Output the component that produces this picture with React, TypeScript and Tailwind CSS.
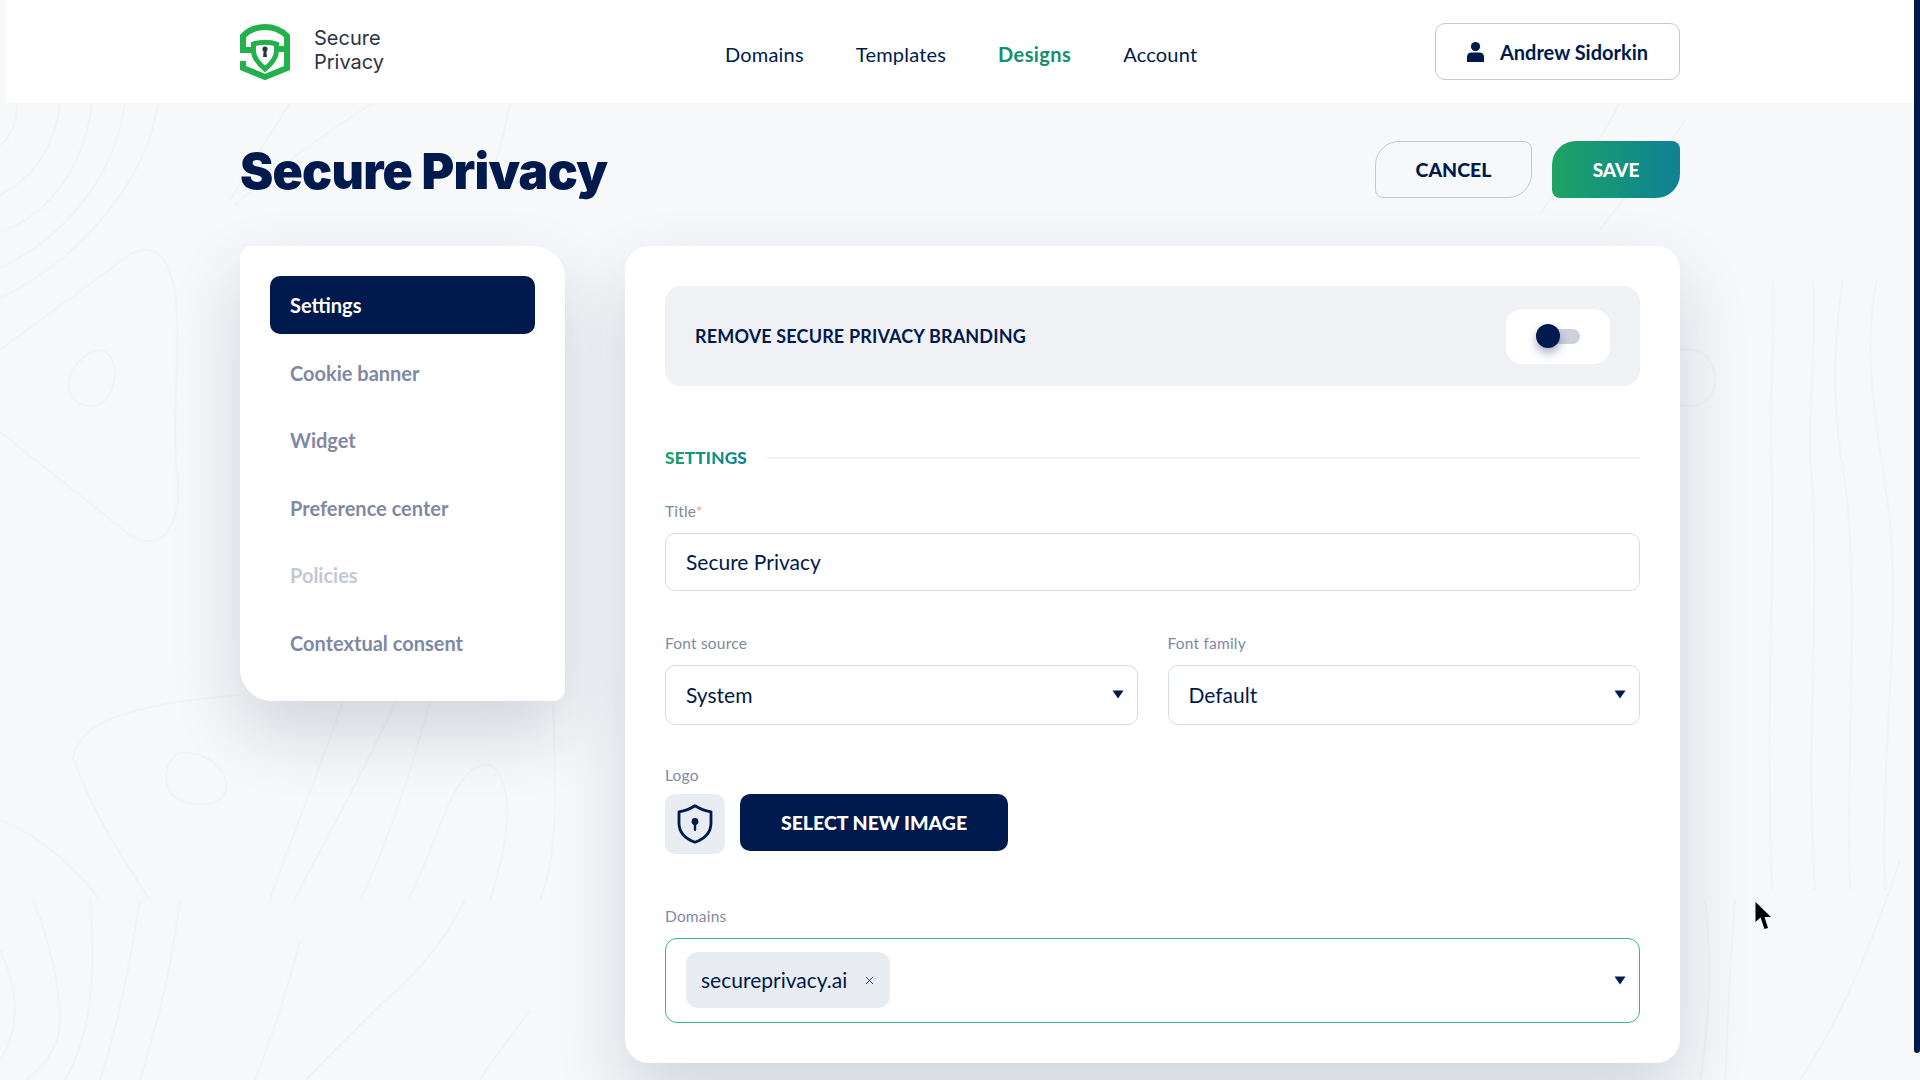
import { X } from 'lucide-react';

const NAV = [
  { label: 'Domains', active: false },
  { label: 'Templates', active: false },
  { label: 'Designs', active: true },
  { label: 'Account', active: false },
];

const SIDE = [
  { label: 'Settings', state: 'active' },
  { label: 'Cookie banner', state: 'idle' },
  { label: 'Widget', state: 'idle' },
  { label: 'Preference center', state: 'idle' },
  { label: 'Policies', state: 'off' },
  { label: 'Contextual consent', state: 'idle' },
];

function Logo() {
  return (
    <svg width="50" height="56" viewBox="0 0 50 56" fill="none" className="shrink-0">
      <path d="M47 22 V12 C40 5 32 3 25 3 C18 3 10 5 3 12 V26 H15" stroke="#22b14c" strokeWidth="6" />
      <path d="M3 37 V44 L25 53 L47 44 V25 H35" stroke="#22b14c" strokeWidth="6" />
      <path d="M13.500 20 C20 17.500 30 17.500 36.500 20 V27 C36.500 34 31 40 25 45 C19 40 13.500 34 13.500 27 Z" fill="#fff" stroke="#22b14c" strokeWidth="5" />
      <circle cx="25" cy="25" r="2.600" fill="#2c3344" />
      <path d="M23.800 26 H26.200 L27 33 H23 Z" fill="#2c3344" />
    </svg>
  );
}

function UserGlyph() {
  return (
    <svg width="17" height="20" viewBox="0 0 17 20" className="shrink-0">
      <circle cx="8.500" cy="4.600" r="4.600" fill="#001a4d" />
      <path d="M0 20 V14.500 A4.500 4.500 0 0 1 4.500 10.500 H12.500 A4.500 4.500 0 0 1 17 14.500 V20 Z" fill="#001a4d" />
    </svg>
  );
}

function ShieldIcon() {
  return (
    <svg width="36" height="40" viewBox="0 0 36 40" fill="none">
      <path d="M18 1.800 C23 5 28 6.800 34 7.800 V19 C34 29 27 35 18 38.200 C9 35 2 29 2 19 V7.800 C8 6.800 13 5 18 1.800 Z" stroke="#001a4d" strokeWidth="2.800" strokeLinejoin="round" />
      <circle cx="18" cy="17.500" r="3.400" fill="#001a4d" />
      <rect x="16.800" y="18" width="2.400" height="9" rx="1.200" fill="#001a4d" />
    </svg>
  );
}

function Caret() {
  return (
    <svg width="12" height="9" viewBox="0 0 12 9" className="-mt-[1px] shrink-0">
      <path d="M0.500 0.500 H11.500 L6 8.500 Z" fill="#001a4d" />
    </svg>
  );
}

// faint contour lines behind the page
function Topo() {
  return (
    <svg className="absolute inset-0" width="1920" height="1080" viewBox="0 0 1920 1080" fill="none" stroke="#f2f3f6" strokeWidth="2">
      <path d="M17 103 C17 125 10 138 0 145" />
      <path d="M60 103 C55 150 30 180 0 195" />
      <path d="M92 103 C85 165 50 215 0 232" />
      <path d="M125 103 C115 180 60 240 0 268" />
      <path d="M158 103 C145 190 70 265 0 298" />
      <path d="M0 350 L125 258 C150 240 170 250 176 300 C182 360 170 420 178 480 C182 525 160 555 130 535 L0 432" />
      <path d="M98 350 C118 350 120 385 105 400 C92 412 70 405 68 385 C68 370 85 352 98 350 Z" />
      <path d="M230 200 C250 165 270 135 290 103" />
      <path d="M373 103 C330 130 280 165 235 205" />
      <path d="M510 103 C505 130 500 150 490 180" />
      <path d="M1619 103 C1600 150 1560 180 1540 215" />
      <path d="M1685 120 C1660 160 1620 200 1600 230" />
      <path d="M1680 350 C1705 345 1718 365 1715 385 C1710 405 1695 408 1680 405" />
      <path d="M1773 280 C1775 360 1768 400 1772 480 C1775 600 1765 700 1772 890" />
      <path d="M1813 280 C1818 360 1805 420 1812 480 C1820 620 1805 740 1815 890" />
      <path d="M1843 280 C1830 360 1835 430 1845 480 C1860 600 1845 760 1850 890" />
      <path d="M1877 280 C1860 360 1880 440 1890 520 C1900 640 1880 760 1885 890" />
      <path d="M73 760 C75 730 110 705 240 695" />
      <path d="M75 760 C85 800 130 870 150 900" />
      <path d="M180 753 C205 750 230 770 226 790 C220 808 190 808 172 795 C162 780 165 760 180 753 Z" />
      <path d="M396 701 C360 780 320 850 294 900" />
      <path d="M343 701 C320 770 290 840 270 900" />
      <path d="M430 701 C410 780 380 860 360 900" />
      <path d="M408 900 C440 840 450 770 485 765 C505 765 510 800 505 840 C500 870 495 885 490 900" />
      <path d="M553 700 C555 780 560 850 540 900" />
      <path d="M465 900 C440 950 410 980 385 1000 C350 1035 325 1060 306 1080" />
      <path d="M33 900 C50 940 60 990 60 1020 C60 1050 40 1070 25 1080" />
      <path d="M90 900 C95 960 95 1030 65 1080" />
      <path d="M140 900 C130 960 120 1020 100 1080" />
      <path d="M180 900 C170 980 155 1030 140 1080" />
      <path d="M0 950 C20 990 20 1030 0 1060" />
      <path d="M0 820 C50 840 85 880 100 900" />
      <path d="M300 940 C285 1000 270 1040 255 1080" />
      <path d="M530 1010 C510 1040 490 1060 480 1080" />
      <path d="M1705 900 C1712 960 1710 1020 1700 1080" />
      <path d="M1735 900 C1730 960 1728 1020 1725 1080" />
      <path d="M1900 860 C1870 950 1840 1020 1800 1080" />
    </svg>
  );
}

function Label({ children, gap }: { children: React.ReactNode; gap: string }) {
  return <div className={`h-[22px] text-[15.5px] leading-[22px] tracking-[0.2px] text-[#7f89a3] ${gap}`}>{children}</div>;
}

export default function App() {
  return (
    <div className="relative h-screen overflow-hidden bg-[#f7f8fa] font-['Lato',sans-serif] text-[#001a4d]">
      <Topo />

      {/* scrollbar */}
      <div className="absolute right-0 top-0 z-10 h-[1053px] w-[6px] rounded-b-[3px] bg-[#001a4d]" />

      <header className="relative ml-[6px] flex h-[103px] items-center bg-white pl-[234px] pr-[240px]">
        <Logo />
        <div className="ml-[24px] w-[411px] pb-[3px] font-['Inter',sans-serif] text-[20px] leading-[24px] text-[#2c3344]">
          Secure
          <br />
          Privacy
        </div>
        <nav className="flex gap-[52px] pt-[5px] text-[20px]">
          {NAV.map((item) => (
            <a key={item.label} className={item.active ? 'font-bold tracking-[0.4px] text-[#139070]' : 'tracking-[0.2px] text-[#001a4d]'}>
              {item.label}
            </a>
          ))}
        </nav>
        <button className="ml-auto flex h-[57px] w-[245px] items-center justify-center gap-[16px] rounded-[10px] border border-[#c4c8d6] bg-white text-[20px] font-bold">
          <UserGlyph />
          Andrew Sidorkin
        </button>
      </header>

      <div className="relative ml-[240px] w-[1440px]">
        <div className="flex h-[143px] items-start justify-between pt-[38px]">
          <h1 className="font-['Inter',sans-serif] text-[50px] font-black leading-[60px] tracking-[-0.75px]">Secure Privacy</h1>
          <div className="flex gap-[20px]">
            <button className="h-[57px] w-[157px] rounded-tl-[24px] rounded-tr-[8px] rounded-br-[24px] rounded-bl-[8px] border border-[#c4c8d6] pt-[1px] text-[19.500px] font-black">
              CANCEL
            </button>
            <button className="h-[57px] w-[128px] rounded-tl-[24px] rounded-tr-[8px] rounded-br-[24px] rounded-bl-[8px] bg-gradient-to-r from-[#20a362] to-[#108193] pt-[1px] text-[19px] font-black text-white">
              SAVE
            </button>
          </div>
        </div>

        <div className="flex items-start gap-[60px]">
          <aside className="w-[325px] rounded-tl-[12px] rounded-tr-[32px] rounded-br-[12px] rounded-bl-[32px] bg-white px-[30px] pb-[29px] pt-[30px] shadow-[0_30px_70px_rgba(0,26,60,0.16)]">
            <div className="flex flex-col gap-[9.500px]">
              {SIDE.map((item) => (
                <div
                  key={item.label}
                  className={`flex h-[58px] items-center rounded-[10px] px-[20px] text-[20px] font-bold ${
                    item.state === 'active'
                      ? 'bg-[#001a4d] text-white'
                      : item.state === 'off'
                        ? 'text-[#c3c8d6]'
                        : 'text-[#7f89a3]'
                  }`}
                >
                  {item.label}
                </div>
              ))}
            </div>
          </aside>

          <main className="h-[817px] w-[1055px] rounded-[24px] bg-white p-[40px] shadow-[0_30px_70px_rgba(0,26,60,0.16)]">
            <div className="flex h-[100px] items-center justify-between rounded-[16px] bg-[#f0f1f5] px-[30px]">
              <span className="text-[18px] font-bold tracking-[0.15px]">REMOVE SECURE PRIVACY BRANDING</span>
              <div className="flex h-[55px] w-[104px] items-center justify-center rounded-[16px] bg-white pl-[3px]">
                <div className="relative h-[15px] w-[40px] rounded-full bg-[#ccd1dc]">
                  <div className="absolute -left-[4px] -top-[5px] h-[24px] w-[24px] rounded-full bg-[#001a4d] shadow-[0_5px_10px_rgba(0,26,77,0.35)]" />
                </div>
              </div>
            </div>

            <div className="mt-[59px] flex items-center gap-[20px]">
              <span className="bg-gradient-to-r from-[#20a362] to-[#108193] bg-clip-text pt-[1px] text-[17.500px] font-black leading-[24px] text-transparent">
                SETTINGS
              </span>
              <div className="h-[2px] flex-1 bg-[#e8f3f0]" />
            </div>

            <div className="mt-[30px]">
              <Label gap="mb-[11px]">
                Title<span className="text-[#f29a9a]">*</span>
              </Label>
              <div className="flex h-[58px] items-center rounded-[10px] border border-[#d5dbe8] px-[20px] text-[21px]">
                Secure Privacy
              </div>
            </div>

            <div className="mt-[41px] grid grid-cols-2 gap-[30px]">
              <div>
                <Label gap="mb-[11px]">Font source</Label>
                <div className="flex h-[60px] items-center justify-between rounded-[10px] border border-[#d5dbe8] pl-[20px] pr-[13px] text-[21px]">
                  System
                  <Caret />
                </div>
              </div>
              <div>
                <Label gap="mb-[11px]">Font family</Label>
                <div className="flex h-[60px] items-center justify-between rounded-[10px] border border-[#d5dbe8] pl-[20px] pr-[13px] text-[21px]">
                  Default
                  <Caret />
                </div>
              </div>
            </div>

            <div className="mt-[39px]">
              <Label gap="mb-[8px]">Logo</Label>
              <div className="flex items-start gap-[15px]">
                <div className="flex h-[60px] w-[60px] items-center justify-center rounded-[10px] bg-[#e9ecf1]">
                  <ShieldIcon />
                </div>
                <button className="h-[57px] w-[268px] rounded-[10px] bg-[#001a4d] pt-[1px] text-[19.500px] font-black text-white">
                  SELECT NEW IMAGE
                </button>
              </div>
            </div>

            <div className="mt-[51px]">
              <Label gap="mb-[11px]">Domains</Label>
              <div className="flex h-[85px] items-center justify-between rounded-[12px] border border-[#3cb585] pl-[20px] pr-[13px]">
                <div className="mb-[1px] flex h-[56px] w-[204px] items-center rounded-[12px] bg-[#e9ecf1] pl-[15px] text-[21px]">
                  secureprivacy.ai
                  <X size={13} className="ml-[16px]" strokeWidth={1.500} />
                </div>
                <Caret />
              </div>
            </div>
          </main>
        </div>
      </div>

      {/* mouse cursor */}
      <svg className="absolute left-[1755px] top-[902px] z-10" width="18" height="28" viewBox="0 0 18 28">
        <path d="M0.500 0 V20 L5.500 15.500 L9.500 27 L13 26 L9.500 15 H16 Z" fill="#000" />
      </svg>
    </div>
  );
}
